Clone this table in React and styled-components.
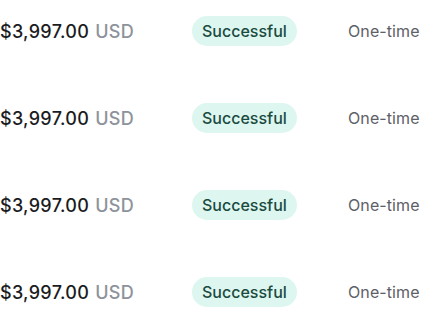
import React from "react";
import styled, { createGlobalStyle } from "styled-components";

const GlobalStyle = createGlobalStyle`
  body {
    margin: 0;
    background: #ffffff;
    font-family: "Inter", "Liberation Sans", sans-serif;
  }
`;

const List = styled.div`
  display: flex;
  flex-direction: column;
  gap: 57px;
  padding-top: 16px;
`;

const Row = styled.div`
  display: grid;
  grid-template-columns: 192px 156px auto;
  align-items: center;
  height: 30px;
`;

const Amount = styled.span`
  font-size: 18px;
  font-weight: 500;
  letter-spacing: 0.3px;
  color: #1b1c1f;
`;

const Currency = styled.span`
  margin-left: 1px;
  color: #8d929b;
`;

const Status = styled.span`
  justify-self: start;
  display: inline-flex;
  align-items: center;
  height: 30px;
  padding: 0 10px;
  border-radius: 15px;
  background: #ddf7f0;
  color: #1b4a40;
  font-size: 16px;
  font-weight: 500;
`;

const Kind = styled.span`
  font-size: 16px;
  color: #5d6067;
  letter-spacing: 0.1px;
`;

const payments = [1, 2, 3, 4].map((id) => ({
  id,
  amount: "$3,997.00",
  currency: "USD",
  status: "Successful",
  kind: "One-time",
}));

const App = function () {
  return (
    <>
      <GlobalStyle />
      <List>
        {payments.map((p) => (
          <Row key={p.id}>
            <Amount>
              {p.amount} <Currency>{p.currency}</Currency>
            </Amount>
            <div>
              <Status>{p.status}</Status>
            </div>
            <Kind>{p.kind}</Kind>
          </Row>
        ))}
      </List>
    </>
  );
};

export default App;
